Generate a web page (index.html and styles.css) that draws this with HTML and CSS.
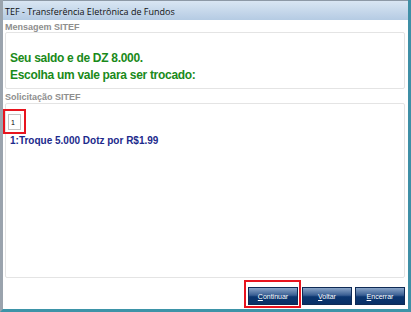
FILE: index.html
```html
<!doctype html>
<html>
<head>
    <meta charset="utf-8">
    <title>TEF - Transferência Eletrônica de Fundos</title>
    <link rel="stylesheet" href="styles.css">
</head>
<body>

<div class="window">
    <div class="titlebar">TEF - Transferência Eletrônica de Fundos</div>

    <div class="content">
        <div class="group-label">Mensagem SITEF</div>
        <div class="panel panel-msg">
            <p class="msg">Seu saldo e de DZ 8.000.<br>Escolha um vale para ser trocado:</p>
        </div>

        <div class="group-label">Solicitação SITEF</div>
        <div class="panel panel-req">
            <div class="mark mark-input">
                <input class="answer" type="text" value="1">
            </div>
            <p class="option">1:Troque 5.000 Dotz por R$1.99</p>
        </div>

        <div class="buttons">
            <div class="mark mark-btn">
                <button class="btn"><u>C</u>ontinuar</button>
            </div>
            <button class="btn"><u>V</u>oltar</button>
            <button class="btn"><u>E</u>ncerrar</button>
        </div>
    </div>
</div>

</body>
</html>
```

FILE: styles.css
```css
html, body {
    margin: 0;
    padding: 0;
    background: #fff;
}

body {
    font-family: "Liberation Sans", Arial, sans-serif;
}

.window {
    width: 411px;
    height: 312px;
    box-sizing: border-box;
    border-left: 3px solid #9aa3ad;
    border-right: 3px solid #3f8fa6;
    border-bottom: 3px solid #3d94a8;
    display: flex;
    flex-direction: column;
    background: #fff;
}

.titlebar {
    height: 19px;
    line-height: 21px;
    padding-left: 2px;
    font-size: 9px;
    font-family: "Open Sans", "Liberation Sans", sans-serif;
    color: #111;
    background: linear-gradient(#d9e6f3, #b5cbe3);
    border-top: 1px solid #8d99a6;
}

.content {
    flex: 1;
    display: flex;
    flex-direction: column;
    padding: 0 3px 0 2px;
}

.group-label {
    font-size: 9px;
    font-weight: bold;
    color: #8e8e8e;
    height: 11px;
    line-height: 12px;
    margin-top: 1px;
}

.panel {
    border: 1px solid #e4e4e4;
    border-radius: 2px;
    background: #fff;
}

.panel-msg {
    height: 57px;
    padding: 17px 0 0 4px;
    box-sizing: border-box;
    margin-bottom: 1px;
}

.msg {
    margin: 0;
    font-size: 12px;
    font-weight: bold;
    line-height: 17px;
    letter-spacing: -0.3px;
    color: #1a8a1a;
}

.panel-req {
    height: 175px;
    box-sizing: border-box;
    padding: 5px 0 0 0;
    margin-top: 1px;
}

.mark {
    border: 2px solid #e8141e;
    display: inline-block;
}

.mark-input {
    padding: 3px 3px 2px 3px;
    margin-left: -3px;
}

.answer {
    display: block;
    width: 13px;
    height: 16px;
    box-sizing: border-box;
    padding: 0 2px;
    font-size: 7px;
    font-family: "Liberation Sans", Arial, sans-serif;
    border: 1px solid #c4c4c4;
    margin: 0;
}

.option {
    margin: 1px 0 0 4px;
    font-size: 10px;
    line-height: 12px;
    font-weight: bold;
    color: #1c2a8c;
}

.buttons {
    display: flex;
    justify-content: flex-end;
    align-items: flex-start;
    gap: 3px;
    margin-top: 9px;
}

.mark-btn {
    padding: 5px 1px 1px 2px;
    margin: -7px -2px 0 0;
}

.btn {
    display: block;
    width: 50px;
    height: 18px;
    padding: 0;
    font-size: 7px;
    font-family: "Liberation Sans", Arial, sans-serif;
    color: #fff;
    border: 1px solid #0e2a55;
    background: linear-gradient(#8aa5c8, #3a5f93 45%, #0b3670 55%, #083066);
}

.btn u {
    text-decoration: underline;
}
```
